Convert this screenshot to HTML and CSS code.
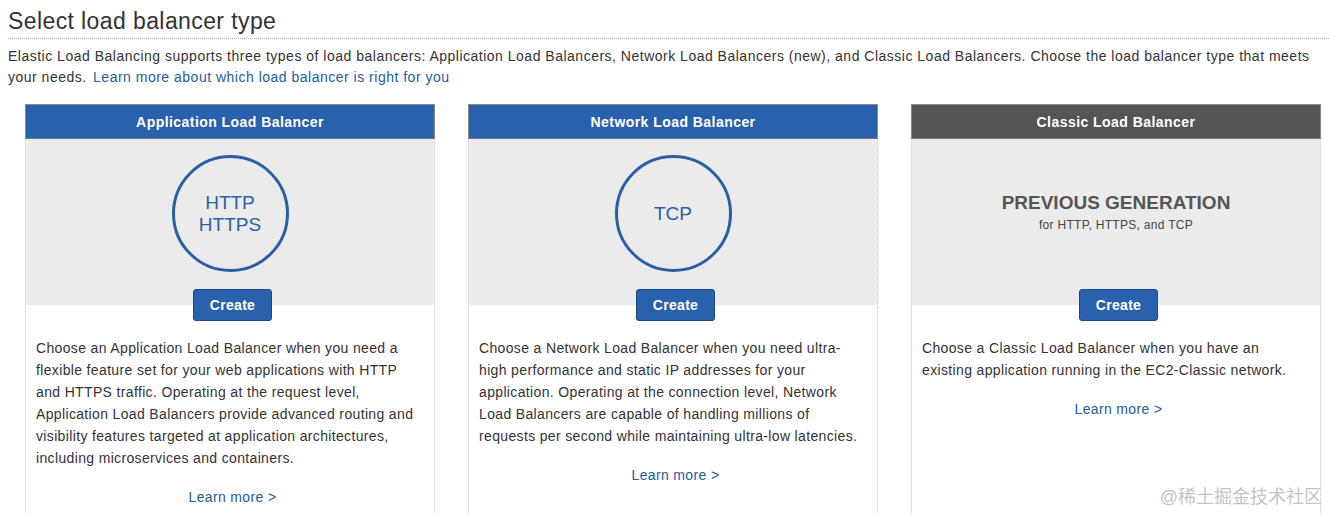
FILE: index.html
```html
<!DOCTYPE html>
<html lang="en">
<head>
    <meta charset="UTF-8">
    <title>Select load balancer type</title>
    <link rel="stylesheet" href="styles.css">
</head>
<body>
    <div class="page">
        <h1 class="page-title">Select load balancer type</h1>
        <p class="intro">
            Elastic Load Balancing supports three types of load balancers: Application Load Balancers, Network Load Balancers (new), and Classic Load Balancers. Choose the load balancer type that meets your needs.
            <a href="#">Learn more about which load balancer is right for you</a>
        </p>

        <div class="lb-row">
            <div class="lb-card">
                <div class="lb-header">Application Load Balancer</div>
                <div class="lb-visual">
                    <div class="lb-circle">HTTP<br>HTTPS</div>
                </div>
                <button class="btn-create">Create</button>
                <p class="lb-desc">Choose an Application Load Balancer when you need a flexible feature set for your web applications with HTTP and HTTPS traffic. Operating at the request level, Application Load Balancers provide advanced routing and visibility features targeted at application architectures, including microservices and containers.</p>
                <a class="lb-more" href="#">Learn more &gt;</a>
            </div>

            <div class="lb-card">
                <div class="lb-header">Network Load Balancer</div>
                <div class="lb-visual">
                    <div class="lb-circle">TCP</div>
                </div>
                <button class="btn-create">Create</button>
                <p class="lb-desc">Choose a Network Load Balancer when you need ultra-high performance and static IP addresses for your application. Operating at the connection level, Network Load Balancers are capable of handling millions of requests per second while maintaining ultra-low latencies.</p>
                <a class="lb-more" href="#">Learn more &gt;</a>
            </div>

            <div class="lb-card">
                <div class="lb-header lb-header-classic">Classic Load Balancer</div>
                <div class="lb-visual">
                    <div class="lb-prev">
                        <strong>PREVIOUS GENERATION</strong>
                        <span>for HTTP, HTTPS, and TCP</span>
                    </div>
                </div>
                <button class="btn-create">Create</button>
                <p class="lb-desc">Choose a Classic Load Balancer when you have an existing application running in the EC2-Classic network.</p>
                <a class="lb-more" href="#">Learn more &gt;</a>
            </div>
        </div>

        <div class="watermark">@稀土掘金技术社区</div>
    </div>
</body>
</html>
```

FILE: styles.css
```css
/* Geral */
* {
    margin: 0;
    padding: 0;
    box-sizing: border-box;
}

html, body {
    height: 100%;
    overflow: hidden;
}

body {
    background-color: #fff;
    color: #333;
    font-family: 'Liberation Sans', Arial, 'Noto Sans CJK SC', sans-serif;
    font-size: 14px;
    letter-spacing: 0.35px;
}

a {
    color: #1f5b9f;
    text-decoration: none;
}

.page {
    position: relative;
    padding: 8px 0 0 8px;
    height: 100%;
}

/* Titulo */
.page-title {
    font-size: 23px;
    font-weight: normal;
    letter-spacing: 0.4px;
    color: #333;
    line-height: 26px;
    padding-bottom: 4px;
    border-bottom: 1px dotted #aaa;
}

.intro {
    margin-top: 7px;
    line-height: 21px;
    padding-right: 14px;
    letter-spacing: 0.5px;
}

.intro a {
    margin-left: 2px;
}

/* Cards */
.lb-row {
    display: flex;
    gap: 33px;
    margin-top: 16px;
    padding-left: 17px;
}

.lb-card {
    width: 410px;
    height: 440px;
    display: flex;
    flex-direction: column;
    align-items: center;
    border-left: 1px dotted #c8c8c8;
    border-right: 1px dotted #c8c8c8;
}

.lb-header {
    width: calc(100% + 2px);
    margin: 0 -1px;
    height: 35px;
    line-height: 35px;
    text-align: center;
    color: #fff;
    font-weight: bold;
    font-size: 14px;
    letter-spacing: 0.45px;
    background-color: #2a61ad;
    border: 1px solid #8a8a8a;
    border-bottom-color: #6f7c8c;
}

.lb-header-classic {
    background-color: #555;
}

.lb-visual {
    width: 100%;
    height: 166px;
    background-color: #ebebeb;
    display: flex;
    justify-content: center;
    align-items: flex-start;
    padding-top: 16px;
}

.lb-circle {
    width: 117px;
    height: 117px;
    border: 3px solid #2b5fa5;
    border-radius: 50%;
    display: flex;
    align-items: center;
    justify-content: center;
    text-align: center;
    color: #2b5fa5;
    font-size: 19px;
    line-height: 22px;
    letter-spacing: 0;
}

.lb-prev {
    margin-top: 36px;
    text-align: center;
    color: #555;
    letter-spacing: 0;
}

.lb-prev strong {
    display: block;
    font-size: 19px;
    line-height: 24px;
}

.lb-prev span {
    display: block;
    font-size: 12px;
    line-height: 20px;
    letter-spacing: 0.3px;
    color: #444;
}

.btn-create {
    margin: -16px 0 0 5px;
    width: 79px;
    height: 32px;
    background-color: #2a61ad;
    border: 1px solid #1c4983;
    border-radius: 3px;
    color: #fff;
    font-family: inherit;
    font-size: 14px;
    font-weight: bold;
    letter-spacing: 0.3px;
    cursor: pointer;
}

.lb-desc {
    align-self: stretch;
    margin-top: 16px;
    padding: 0 10px;
    line-height: 22px;
    font-size: 14px;
}

.lb-more {
    margin: 17px 0 0 5px;
    line-height: 22px;
}

.watermark {
    position: absolute;
    right: 7px;
    bottom: 7px;
    font-size: 18px;
    letter-spacing: 0;
    color: #c4c4c4;
}
```
